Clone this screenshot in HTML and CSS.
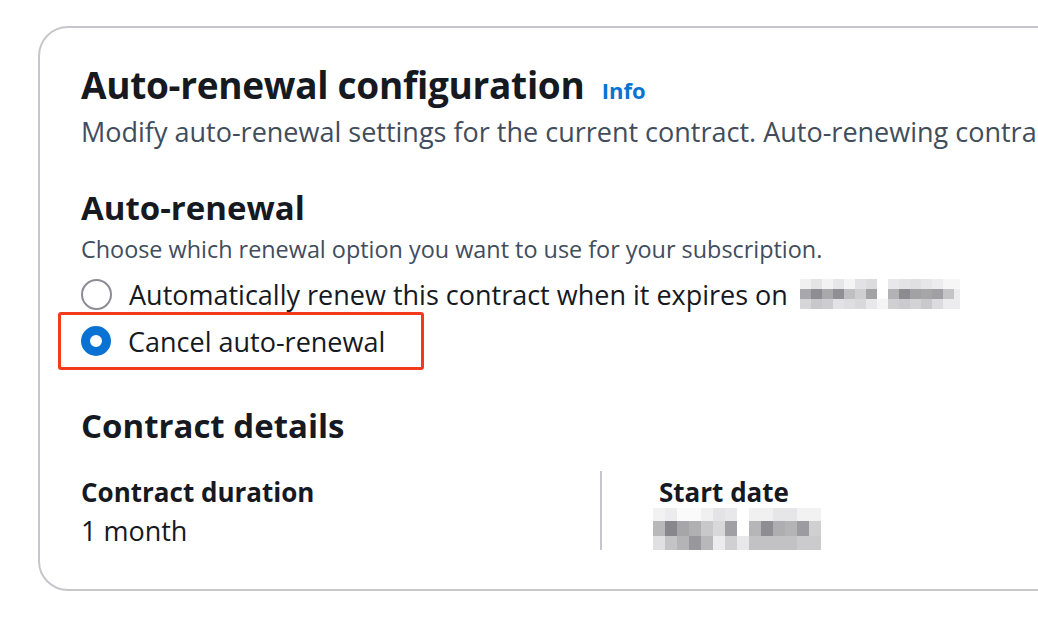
FILE: index.html
```html
<!DOCTYPE html>
<html lang="en">
<head>
  <meta charset="UTF-8" />
  <title>Auto-renewal configuration</title>
  <link rel="stylesheet" href="styles.css">
</head>
<body>
  <div class="panel">
    <div class="panel-header">
      <h1>Auto-renewal configuration <a class="info" href="#">Info</a></h1>
      <p class="desc">Modify auto-renewal settings for the current contract. Auto-renewing contracts are renewed automatically at the end of the term.</p>
    </div>

    <h2>Auto-renewal</h2>
    <p class="hint">Choose which renewal option you want to use for your subscription.</p>

    <div class="options">
      <label class="option">
        <span class="radio"></span>
        <span>Automatically renew this contract when it expires on</span>
        <span class="blur blur-date"></span>
      </label>
      <label class="option highlight">
        <span class="radio checked"></span>
        <span>Cancel auto-renewal</span>
      </label>
    </div>

    <h2 class="details-title">Contract details</h2>
    <div class="details">
      <div class="detail">
        <div class="detail-label">Contract duration</div>
        <div class="detail-value">1 month</div>
      </div>
      <div class="detail divided">
        <div class="detail-label">Start date</div>
        <div class="blur blur-start"></div>
      </div>
    </div>
  </div>
</body>
</html>
```

FILE: styles.css
```css
body {
  margin: 0;
  background: #ffffff;
  font-family: 'Open Sans', 'Noto Sans', sans-serif;
  color: #16191f;
  overflow: hidden;
}
.panel {
  margin: 26px 0 0 38px;
  width: 1100px;
  height: 565px;
  box-sizing: border-box;
  border: 2px solid #c6c6cd;
  border-radius: 30px;
  padding: 31px 0 0 41px;
}
h1 {
  margin: 0;
  font-size: 37px;
  font-weight: 700;
  line-height: 52px;
  letter-spacing: -0.3px;
}
.info {
  font-size: 22px;
  line-height: 1;
  color: #0972d3;
  text-decoration: none;
  margin-left: 8px;
  letter-spacing: 0;
}
.desc {
  margin: 0;
  font-size: 27px;
  line-height: 42px;
  color: #414d5c;
  white-space: nowrap;
}
h2 {
  margin: 34px 0 0;
  font-size: 33px;
  font-weight: 700;
  line-height: 42px;
}
.hint {
  margin: 4px 0 0;
  font-size: 23.4px;
  line-height: 32px;
  color: #414d5c;
}
.options {
  display: flex;
  flex-direction: column;
  margin-top: 11px;
}
.option {
  display: flex;
  align-items: center;
  gap: 17px;
  font-size: 27px;
  height: 36px;
}
.radio {
  width: 27px;
  height: 27px;
  border: 2px solid #8c8c94;
  border-radius: 50%;
  flex-shrink: 0;
}
.radio.checked {
  border: 9.5px solid #0972d3;
  width: 12px;
  height: 12px;
}
.highlight {
  margin: 0 0 0 -23px;
  padding: 0 0 0 20px;
  width: 340px;
  height: 52px;
  border: 3px solid #f33b1c;
  border-radius: 3px;
}
.blur {
  display: inline-block;
  flex-shrink: 0;
}
/* pixelated placeholder for the hidden expiry date */
.blur-date {
  width: 160px;
  height: 30px;
  margin-left: -5px;
  background:
    linear-gradient(90deg, #f0f0f1 0 11px, #e4e4e6 11px 22px, #f2f2f3 22px 33px, #e6e6e8 33px 44px, #f4f4f5 44px 55px, #e2e2e4 55px 66px, #dcdcde 66px 77px, #fff 77px 88px, #e8e8ea 88px 99px, #e4e4e6 99px 110px, #e0e0e2 110px 121px, #e6e6e8 121px 132px, #ececee 132px 143px, #f6f6f7 143px 160px) 0 0 / 100% 10px no-repeat,
    linear-gradient(90deg, #a8a8ac 0 11px, #8e8e92 11px 22px, #a9a9ac 22px 33px, #909094 33px 44px, #bfbfc2 44px 55px, #cfcfd1 55px 66px, #a3a3a6 66px 77px, #fff 77px 88px, #b2b2b5 88px 99px, #8c8c90 99px 110px, #a2a2a5 110px 121px, #a6a6a9 121px 132px, #a0a0a4 132px 143px, #c4c4c7 143px 154px, #ececee 154px 160px) 0 10px / 100% 10px no-repeat,
    linear-gradient(90deg, #d6d6d8 0 11px, #c8c8cb 11px 22px, #cdcdd0 22px 33px, #e2e2e4 33px 44px, #dedee0 44px 55px, #d9d9db 55px 66px, #e8e8ea 66px 77px, #f4f4f5 77px 88px, #d0d0d3 88px 99px, #cbcbce 99px 110px, #d3d3d5 110px 121px, #c9c9cc 121px 132px, #dcdcde 132px 143px, #ececee 143px 160px) 0 20px / 100% 10px no-repeat;
}
.details-title {
  margin-top: 35px;
}
.details {
  display: flex;
  margin-top: 24px;
}
.detail {
  width: 519px;
  flex-shrink: 0;
}
.detail.divided {
  border-left: 2px solid #c6c6cd;
  padding-left: 57px;
  height: 79px;
}
.detail-label {
  font-size: 26px;
  font-weight: 700;
  line-height: 42px;
}
.detail-value {
  font-size: 27px;
  line-height: 36px;
}
/* pixelated placeholder for the hidden start date */
.blur-start {
  width: 168px;
  height: 42px;
  margin-top: -5px;
  margin-left: -6px;
  background:
    linear-gradient(90deg, #f2f2f3 0 12px, #ececee 12px 24px, #fafafa 24px 48px, #f0f0f1 48px 60px, #e4e4e6 60px 72px, #e8e8ea 72px 84px, #fff 84px 96px, #f0f0f1 96px 120px, #e6e6e8 120px 144px, #f2f2f3 144px 168px) 0 0 / 100% 13px no-repeat,
    linear-gradient(90deg, #b8b8bb 0 12px, #88888c 12px 24px, #a6a6a9 24px 36px, #b0b0b3 36px 48px, #c8c8cb 48px 60px, #d8d8da 60px 72px, #a0a0a4 72px 84px, #fff 84px 96px, #b6b6b9 96px 108px, #8e8e92 108px 120px, #aeaeb1 120px 132px, #b4b4b7 132px 144px, #9c9ca0 144px 156px, #d0d0d2 156px 168px) 0 13px / 100% 15px no-repeat,
    linear-gradient(90deg, #e0e0e2 0 12px, #c4c4c7 12px 24px, #b4b4b7 24px 36px, #98989c 36px 48px, #b8b8bb 48px 60px, #ececee 60px 72px, #d0d0d2 72px 84px, #e8e8ea 84px 96px, #c2c2c5 96px 144px, #cbcbce 144px 168px) 0 28px / 100% 14px no-repeat;
}
```
